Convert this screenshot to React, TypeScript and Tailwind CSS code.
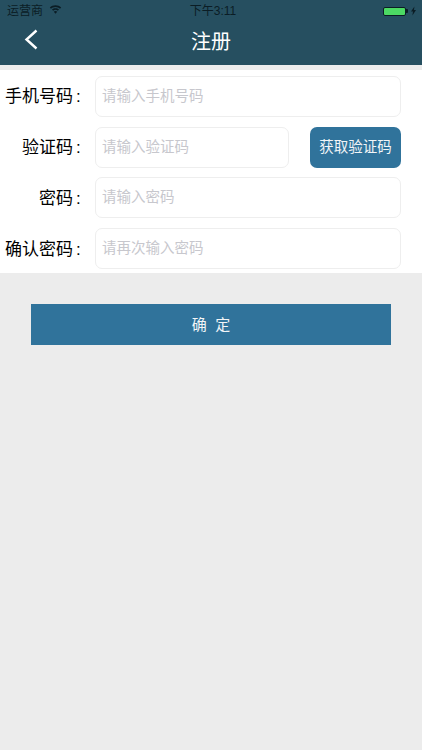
const cjk = "font-['Liberation_Sans','Noto_Sans_CJK_SC',sans-serif]";

const inputClass =
  "h-[41px] min-w-0 rounded-[7px] border border-[#eeeeee] bg-white pl-[6px] pr-[6px] pb-[1px] text-[14.5px] text-black outline-none placeholder:text-[#c7c7cd]";

function StatusBar() {
  return (
    <div className="relative flex h-[22px] items-center pl-[7px] pr-[6px] text-[12px] text-[#0b1d25]">
      <span>运营商</span>
      <svg className="mb-[3px] ml-[6px]" width="13" height="9" viewBox="0 0 13 10" fill="#0b1d25">
        <path d="M6.5 0.3C4 0.3 1.8 1.3 0.2 2.8L1.5 4.1C2.8 2.9 4.5 2.1 6.5 2.1s3.7 0.8 5 2l1.3-1.3C11.2 1.3 9 0.3 6.5 0.3z" />
        <path d="M6.5 3.5c-1.5 0-2.8 0.6-3.9 1.5l1.3 1.3c0.7-0.6 1.6-1 2.6-1s1.9 0.4 2.6 1l1.3-1.3c-1.1-0.9-2.4-1.5-3.9-1.5z" />
        <path d="M6.5 6.6c-0.8 0-1.4 0.3-1.9 0.8l1.9 2.2 1.9-2.2c-0.5-0.5-1.1-0.8-1.9-0.8z" />
      </svg>
      <span className="flex-1 pr-[19px] text-center">下午3:11</span>
      <div className="flex items-center">
        <div className="flex h-[9px] w-[23px] items-center rounded-[2px] border-[0.5px] border-[#0b1d25] bg-[#4cd964]" />
        <div className="h-[4px] w-[1.5px] rounded-r-[1px] bg-[#0b1d25]" />
        <svg className="ml-[3.5px]" width="5" height="10" viewBox="0 0 5 9" fill="#0b1d25">
          <path d="M3.4 0L0 5h2L1.4 9 5 3.6H3z" />
        </svg>
      </div>
    </div>
  );
}

function NavBar() {
  return (
    <div className="relative flex h-[43px] items-center justify-center">
      <svg className="absolute left-[24px] top-[7px]" width="14" height="22" viewBox="0 0 14 22" fill="none">
        <path d="M12.5 1.5L2.5 10.5l10 9" stroke="#ffffff" strokeWidth="2.4" />
      </svg>
      <span className="pb-[3px] text-[20px] text-white">注册</span>
    </div>
  );
}

function FormRow({ label, placeholder, children }: { label: string; placeholder: string; children?: React.ReactNode }) {
  return (
    <div className="flex h-[41px] items-center">
      <label className="flex w-[95px] justify-end pr-[13px] pt-[2px] text-[17px] text-black">
        {label}
        <span className="ml-[3px] w-[6px]">:</span>
      </label>
      <input className={`${inputClass} flex-1`} placeholder={placeholder} />
      {children}
    </div>
  );
}

export default function App() {
  return (
    <div className={`flex min-h-[750px] w-[422px] flex-col bg-[#ececec] ${cjk}`}>
      <div className="bg-[#264f60]">
        <StatusBar />
        <NavBar />
      </div>
      <div className="mt-[5px] flex flex-col gap-[9.9px] bg-white pb-[4px] pr-[21px] pt-[5.7px]">
        <FormRow label="手机号码" placeholder="请输入手机号码" />
        <FormRow label="验证码" placeholder="请输入验证码">
          <button className="ml-[21px] h-[41px] w-[91px] rounded-[7px] bg-[#30739b] pt-[2px] text-[14.5px] text-[#f2f5f7]">
            获取验证码
          </button>
        </FormRow>
        <FormRow label="密码" placeholder="请输入密码" />
        <FormRow label="确认密码" placeholder="请再次输入密码" />
      </div>
      <button className="mx-[31px] mt-[31px] h-[41px] whitespace-pre bg-[#30739b] text-[15px] text-[#f2f5f7]">
        确  定
      </button>
    </div>
  );
}
